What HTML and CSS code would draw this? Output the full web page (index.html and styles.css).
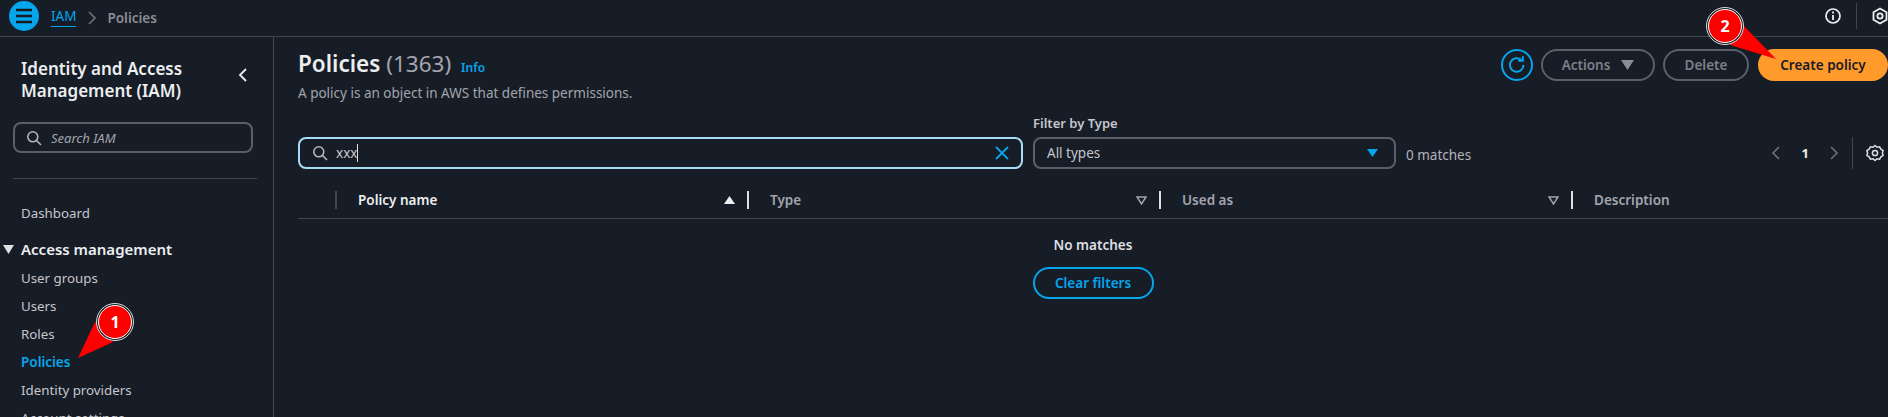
FILE: index.html
```html
<!DOCTYPE html>
<html lang="en">
<head>
    <meta charset="UTF-8">
    <title>Policies | IAM</title>
    <link rel="stylesheet" href="styles.css">
</head>
<body>
    <header class="topbar">
        <button class="menu-btn">
            <svg width="20" height="16" viewBox="0 0 20 16"><path d="M2 2h16M2 8h16M2 14h16" stroke="#161d26" stroke-width="2.4" fill="none"/></svg>
        </button>
        <a class="crumb-link">IAM</a>
        <svg class="crumb-sep" width="10" height="14" viewBox="0 0 10 14"><path d="M2 1l6 6-6 6" stroke="#687078" stroke-width="1.7" fill="none"/></svg>
        <span class="crumb-current">Policies</span>
        <div class="top-icons">
            <svg width="18" height="18" viewBox="0 0 18 18"><circle cx="9" cy="9" r="7" stroke="#eceef0" stroke-width="1.7" fill="none"/><path d="M9 8v5M9 4.6v2" stroke="#eceef0" stroke-width="1.8"/></svg>
            <span class="top-divider"></span>
            <svg class="top-hex" width="18" height="18" viewBox="0 0 18 18"><path d="M9 1.5l6.5 3.7v7.6L9 16.5l-6.5-3.7V5.2z" stroke="#eceef0" stroke-width="1.8" fill="none"/><circle cx="9" cy="9" r="2.6" stroke="#eceef0" stroke-width="1.8" fill="none"/></svg>
        </div>
    </header>

    <div class="layout">
        <nav class="sidebar">
            <div class="side-head">
                <h2>Identity and Access Management (IAM)</h2>
                <svg width="12" height="16" viewBox="0 0 12 16"><path d="M9 2L3 8l6 6" stroke="#eceef0" stroke-width="1.8" fill="none"/></svg>
            </div>
            <div class="side-search">
                <svg width="16" height="16" viewBox="0 0 16 16"><circle cx="6.8" cy="6.8" r="5" stroke="#b4b4bb" stroke-width="1.6" fill="none"/><path d="M10.5 10.5L15 15" stroke="#b4b4bb" stroke-width="1.6"/></svg>
                <span>Search IAM</span>
            </div>
            <hr class="side-rule">
            <a class="side-link first">Dashboard</a>
            <div class="side-group">
                <svg width="11" height="9" viewBox="0 0 11 9"><path d="M0 0h11L5.5 9z" fill="#dedee3"/></svg>
                <span>Access management</span>
            </div>
            <a class="side-link">User groups</a>
            <a class="side-link">Users</a>
            <a class="side-link">Roles</a>
            <a class="side-link active">Policies</a>
            <a class="side-link">Identity providers</a>
            <a class="side-link">Account settings</a>
        </nav>

        <main class="content">
            <div class="page-head">
                <div>
                    <h1>Policies <span class="count">(1363)</span> <a class="info">Info</a></h1>
                    <p class="desc">A policy is an object in AWS that defines permissions.</p>
                </div>
                <div class="actions">
                    <button class="btn-refresh">
                        <svg width="20" height="20" viewBox="0 0 20 20"><path d="M16.5 10a6.8 6.8 0 1 1-2.4-5.2" stroke="#06a5ec" stroke-width="2" fill="none"/><path d="M15.8 1.2v4.6h-4.6" stroke="#06a5ec" stroke-width="2" fill="none"/></svg>
                    </button>
                    <button class="btn btn-actions">Actions <svg width="13" height="10" viewBox="0 0 13 10"><path d="M0 0h13L6.5 10z" fill="#8c8c94"/></svg></button>
                    <button class="btn btn-delete">Delete</button>
                    <button class="btn btn-primary">Create policy</button>
                </div>
            </div>

            <div class="filters">
                <div class="filter-search">
                    <svg width="16" height="16" viewBox="0 0 16 16"><circle cx="6.8" cy="6.8" r="5" stroke="#b4b4bb" stroke-width="1.6" fill="none"/><path d="M10.5 10.5L15 15" stroke="#b4b4bb" stroke-width="1.6"/></svg>
                    <span class="typed">xxx</span>
                    <svg class="clear-x" width="14" height="14" viewBox="0 0 14 14"><path d="M1 1l12 12M13 1L1 13" stroke="#06a5ec" stroke-width="1.8"/></svg>
                </div>
                <div class="filter-type">
                    <label>Filter by Type</label>
                    <div class="select">
                        <span>All types</span>
                        <svg width="11" height="8" viewBox="0 0 11 8"><path d="M0 0h11L5.5 8z" fill="#06a5ec"/></svg>
                    </div>
                </div>
                <span class="matches">0 matches</span>
                <div class="pager">
                    <svg width="10" height="14" viewBox="0 0 10 14"><path d="M8 1L2 7l6 6" stroke="#687078" stroke-width="1.7" fill="none"/></svg>
                    <b>1</b>
                    <svg width="10" height="14" viewBox="0 0 10 14"><path d="M2 1l6 6-6 6" stroke="#687078" stroke-width="1.7" fill="none"/></svg>
                    <span class="pager-divider"></span>
                    <svg width="18" height="18" viewBox="0 0 18 18"><path d="M9 1.5l2 1.7 2.6-.4 1.3 2.3 2.2 1.4-.7 2.5.7 2.5-2.2 1.4-1.3 2.3-2.6-.4-2 1.7-2-1.7-2.6.4-1.3-2.3L.9 11.5 1.6 9 .9 6.5l2.200-1.400 1.300-2.300 2.600.4z" stroke="#dedee3" stroke-width="1.5" fill="none"/><circle cx="9" cy="9" r="2.6" stroke="#dedee3" stroke-width="1.5" fill="none"/></svg>
                </div>
            </div>

            <div class="table-head">
                <div class="col col-check"></div>
                <div class="col col-name"><span>Policy name</span><svg width="11" height="8" viewBox="0 0 11 8"><path d="M0 8h11L5.500 0z" fill="#eceef0"/></svg></div>
                <div class="col"><span>Type</span><svg width="11" height="9" viewBox="0 0 11 9"><path d="M1 1h9L5.500 8z" stroke="#a4a4ad" stroke-width="1.500" fill="none"/></svg></div>
                <div class="col"><span>Used as</span><svg width="11" height="9" viewBox="0 0 11 9"><path d="M1 1h9L5.500 8z" stroke="#a4a4ad" stroke-width="1.500" fill="none"/></svg></div>
                <div class="col col-last"><span>Description</span></div>
            </div>

            <div class="empty">
                <strong>No matches</strong>
                <button class="btn btn-clear">Clear filters</button>
            </div>
        </main>
    </div>

    <!-- numbered callouts on top of the screenshot -->
    <svg class="callout callout-one" width="60" height="70" viewBox="0 0 60 70">
        <path d="M19 30L2 66 37 50z" fill="#f00"/>
        <circle cx="39" cy="30" r="18.500" fill="#161d26" stroke="#ddd" stroke-width="1"/>
        <circle cx="39" cy="30" r="16.500" fill="#f00" stroke="#fff" stroke-width="1"/>
        <text x="39" y="36" text-anchor="middle" class="callout-num">1</text>
    </svg>
    <svg class="callout callout-two" width="80" height="70" viewBox="0 0 80 70">
        <path d="M43 25L76 59 30 45z" fill="#f00"/>
        <circle cx="25" cy="26" r="18.500" fill="#161d26" stroke="#ddd" stroke-width="1"/>
        <circle cx="25" cy="26" r="16.500" fill="#f00" stroke="#fff" stroke-width="1"/>
        <text x="25" y="32" text-anchor="middle" class="callout-num">2</text>
    </svg>
</body>
</html>
```

FILE: styles.css
```css
html, body {
    margin: 0;
    height: 417px;
    overflow: hidden;
}
body {
    font-family: "Noto Sans", "Open Sans", sans-serif;
    font-size: 14px;
    background-color: #161d26;
    color: #c6c6cd;
    position: relative;
}
button {
    font-family: inherit;
}
.topbar {
    display: flex;
    align-items: center;
    height: 36px;
    padding-left: 9px;
    border-bottom: 1px solid #424650;
}
.menu-btn {
    width: 30px;
    height: 30px;
    border: none;
    border-radius: 50%;
    background-color: #06a5ec;
    padding: 0;
    margin-right: 12px;
    display: flex;
    align-items: center;
    justify-content: center;
    position: relative;
    top: -2px;
}
.crumb-link {
    color: #06a5ec;
    font-size: 13.5px;
    line-height: 19px;
    border-bottom: 1px solid #06a5ec;
    margin-right: 11px;
    position: relative;
    top: -1px;
}
.crumb-sep {
    margin-right: 10px;
}
.crumb-current {
    font-size: 13.5px;
    font-weight: 600;
    color: #8c8c94;
}
.top-icons {
    margin-left: auto;
    display: flex;
    align-items: center;
    margin-right: -1px;
    position: relative;
    top: -2px;
}
.top-divider {
    width: 1px;
    height: 26px;
    background-color: #424650;
    margin: 0 14px;
}
.layout {
    display: flex;
    height: 380px;
}
.sidebar {
    width: 273px;
    flex: none;
    border-right: 1px solid #424650;
    padding-top: 21px;
}
.side-head {
    display: flex;
    justify-content: space-between;
    padding: 0 24px 0 21px;
}
.side-head h2 {
    margin: 0;
    width: 190px;
    font-size: 17px;
    line-height: 22px;
    font-weight: 600;
    color: #eceef0;
}
.side-head svg {
    margin-top: 9px;
}
.side-search {
    margin: 20px 21px 0 13px;
    width: 225px;
    height: 27px;
    border: 2px solid #5a5f69;
    border-radius: 8px;
    display: flex;
    align-items: center;
    gap: 9px;
    padding-left: 11px;
    font-style: italic;
    font-size: 13px;
    color: #a4a4ad;
}
.side-rule {
    border: none;
    border-top: 1px solid #424650;
    margin: 25px 16px 0 13px;
}
.side-link {
    display: block;
    margin-left: 21px;
    height: 28px;
    line-height: 28px;
    font-size: 13.3px;
    color: #c6c6cd;
}
.side-link.first {
    margin-top: 20px;
}
.side-link.active {
    color: #06a5ec;
    font-weight: 600;
    font-size: 13.5px;
}
.side-group {
    display: flex;
    align-items: center;
    gap: 7px;
    padding-left: 3px;
    margin-top: 7px;
    height: 30px;
    font-size: 15px;
    font-weight: 600;
    color: #eceef0;
}
.content {
    flex: 1;
    padding: 12px 0 0 24px;
    min-width: 0;
}
.page-head {
    display: flex;
    justify-content: space-between;
    height: 74px;
}
.page-head h1 {
    margin: 0;
    font-size: 22.5px;
    line-height: 30px;
    font-weight: 600;
    color: #eceef0;
}
.count {
    font-weight: 400;
    color: #a4a4ad;
}
.info {
    color: #06a5ec;
    font-size: 12px;
    font-weight: 600;
    margin-left: 4px;
}
.desc {
    margin: 0;
    font-size: 13.5px;
    line-height: 20px;
    color: #a4a4ad;
}
.actions {
    display: flex;
    align-items: flex-start;
    gap: 8px;
}
.btn {
    height: 32px;
    border-radius: 16px;
    background: none;
    border: 2px solid #5a5f69;
    font-size: 13.5px;
    font-weight: 600;
    color: #7d8088;
    padding: 0;
    box-sizing: border-box;
}
.btn-refresh {
    width: 32px;
    height: 32px;
    border-radius: 50%;
    background: none;
    border: 2px solid #06a5ec;
    padding: 0;
    display: flex;
    align-items: center;
    justify-content: center;
}
.btn-actions {
    width: 114px;
    display: flex;
    align-items: center;
    justify-content: center;
    gap: 11px;
}
.btn-delete {
    width: 86px;
}
.btn-primary {
    width: 130px;
    background-color: #ff9a2b;
    border-color: #ff9a2b;
    color: #161d26;
    margin-left: 1px;
}
.filters {
    display: flex;
    align-items: flex-end;
    height: 46px;
}
.filter-search {
    width: 697px;
    height: 28px;
    border: 2px solid #a8dcf5;
    border-radius: 8px;
    display: flex;
    align-items: center;
    padding: 0 12px;
    margin-right: 10px;
    flex: none;
    color: #c6c6cd;
}
.typed {
    margin-left: 8px;
    font-size: 13.5px;
    border-right: 1px solid #dedee3;
    line-height: 18px;
}
.clear-x {
    margin-left: auto;
}
.filter-type label {
    display: block;
    font-size: 13px;
    font-weight: 600;
    line-height: 18px;
    margin-bottom: 5px;
    color: #c6c6cd;
}
.select {
    width: 331px;
    height: 28px;
    border: 2px solid #5a5f69;
    border-radius: 8px;
    display: flex;
    align-items: center;
    justify-content: space-between;
    padding: 0 16px 0 12px;
    font-size: 13.5px;
}
.matches {
    margin-left: 10px;
    margin-bottom: 5px;
    font-size: 13.5px;
    color: #b4b4bb;
}
.pager {
    margin-left: auto;
    display: flex;
    align-items: center;
    height: 32px;
    margin-right: 4px;
    color: #eceef0;
}
.pager b {
    font-size: 13px;
    margin: 0 20px 0 21px;
}
.pager-divider {
    width: 1px;
    height: 32px;
    background-color: #424650;
    margin: 0 13px;
}
.table-head {
    display: grid;
    grid-template-columns: 39px 412px 412px 412px 1fr;
    height: 36px;
    align-items: center;
    margin-top: 13px;
    border-bottom: 1px solid #424650;
    font-size: 13.5px;
    font-weight: 600;
    color: #a4a4ad;
}
.col {
    display: flex;
    align-items: center;
    justify-content: space-between;
    height: 18px;
    padding: 0 12px 0 21px;
    border-right: 2px solid #dedee3;
    box-sizing: border-box;
}
.col-check {
    border-right-color: #424650;
}
.col-name {
    color: #eceef0;
}
.col-last {
    border-right: none;
}
.empty {
    display: flex;
    flex-direction: column;
    align-items: center;
    padding-top: 16px;
    color: #dedee3;
    font-size: 13.5px;
}
.empty strong {
    font-weight: 600;
    line-height: 20px;
}
.btn-clear {
    margin-top: 12px;
    width: 121px;
    border-color: #06a5ec;
    color: #06a5ec;
}
.callout {
    position: absolute;
}
.callout-one {
    left: 76px;
    top: 292px;
}
.callout-two {
    left: 1700px;
    top: 0;
}
.callout-num {
    font-family: "Noto Sans", sans-serif;
    font-size: 16px;
    font-weight: 700;
    fill: #fff;
}
```
